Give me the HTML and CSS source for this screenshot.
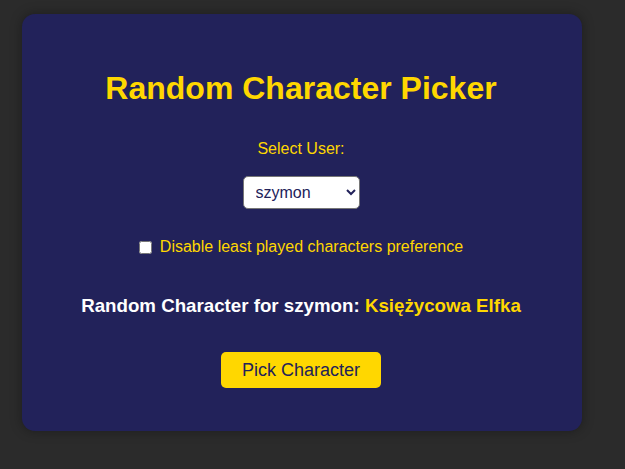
FILE: index.html
```html
<!DOCTYPE html>
<html>
<head>
<meta charset="utf-8">
<link rel="stylesheet" href="styles.css">
</head>
<body>
<div class="card">
  <h1 class="title">Random Character Picker</h1>
  <label class="field-label" for="user">Select User:</label>
  <select id="user" class="select">
    <option>szymon</option>
  </select>
  <label class="check">
    <input type="checkbox" class="checkbox">
    <span>Disable least played characters preference</span>
  </label>
  <h3 class="result">Random Character for szymon: <span class="name">Księżycowa Elfka</span></h3>
  <button class="btn">Pick Character</button>
</div>
</body>
</html>
```
FILE: styles.css
```css
html, body {
  margin: 0;
  padding: 0;
  background: #2b2b2b;
  height: 100%;
}
body {
  font-family: "Liberation Sans", Arial, sans-serif;
  padding: 14px 0 0 22px;
  box-sizing: border-box;
}
.card {
  width: 560px;
  height: 417px;
  box-sizing: border-box;
  background: #22225a;
  border-radius: 13px;
  box-shadow: 0 0 12px rgba(0,0,0,0.35);
  display: flex;
  flex-direction: column;
  align-items: center;
  padding-top: 56px;
  padding-right: 2px;
}
.title {
  margin: 0;
  color: #ffd700;
  font-size: 32px;
  font-weight: bold;
  line-height: 37px;
}
.field-label {
  margin-top: 33px;
  color: #ffd700;
  font-size: 16px;
  line-height: 18px;
}
.select {
  margin-top: 18px;
  width: 117px;
  height: 33px;
  font-family: "Liberation Sans", Arial, sans-serif;
  font-size: 16px;
  color: #22225a;
  background: #fff;
  border: 1px solid #767676;
  border-radius: 5px;
  padding: 0 8px;
}
.check {
  margin-top: 29px;
  display: flex;
  align-items: center;
  color: #ffd700;
  font-size: 16px;
  line-height: 18px;
}
.checkbox {
  margin: 0 8px 0 0;
  width: 13px;
  height: 13px;
}
.result {
  margin: 39px 0 0 0;
  color: #fff;
  font-size: 18.72px;
  font-weight: bold;
  line-height: 22px;
}
.name {
  color: #ffd700;
}
.btn {
  margin-top: 35px;
  width: 160px;
  height: 36px;
  background: #ffd700;
  color: #22225a;
  border: none;
  border-radius: 5px;
  font-family: "Liberation Sans", Arial, sans-serif;
  font-size: 18px;
}
```
